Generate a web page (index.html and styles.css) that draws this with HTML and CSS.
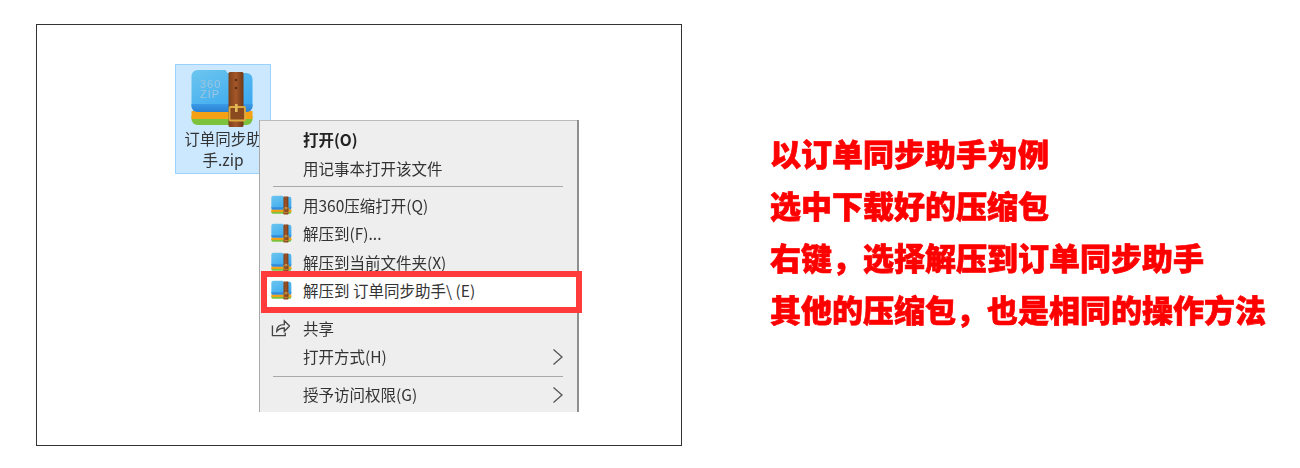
FILE: index.html
```html
<!DOCTYPE html>
<html lang="zh-CN">
<head>
<meta charset="utf-8">
<title>解压说明</title>
<link rel="stylesheet" href="styles.css">
</head>
<body>
<svg class="defs" width="0" height="0" aria-hidden="true">
  <defs>
    <linearGradient id="sky" x1="0" y1="0" x2="0.7" y2="1">
      <stop offset="0" stop-color="#6cc6ee"/>
      <stop offset="1" stop-color="#3ba8f0"/>
    </linearGradient>
    <linearGradient id="band" x1="0" y1="0" x2="0" y2="1">
      <stop offset="0" stop-color="#3a9ae6"/>
      <stop offset="1" stop-color="#2a80d2"/>
    </linearGradient>
    <linearGradient id="strap" x1="0" y1="0" x2="1" y2="0">
      <stop offset="0" stop-color="#7d4019"/>
      <stop offset="0.5" stop-color="#a4572a"/>
      <stop offset="1" stop-color="#6e3816"/>
    </linearGradient>
    <symbol id="archive" viewBox="0 0 64 60">
      <path d="M1 48h61v3a6 6 0 0 1-6 6H7a6 6 0 0 1-6-6z" fill="#7cc23c"/>
      <rect x="1" y="43" width="61" height="8" fill="#f5a116"/>
      <path d="M1 8a6 6 0 0 1 6-6h28l2 3h19a6 6 0 0 1 6 6v27a6 6 0 0 1-6 6H7a6 6 0 0 1-6-6z" fill="url(#sky)"/>
      <path d="M1 36h61v2a6 6 0 0 1-6 6H7a6 6 0 0 1-6-6z" fill="url(#band)"/>
      <rect x="38" y="4" width="15" height="55" rx="1.500" fill="url(#strap)"/>
      <circle cx="45.500" cy="12" r="1.300" fill="#5e2f12"/>
      <circle cx="45.500" cy="20" r="1.300" fill="#5e2f12"/>
      <rect x="39" y="39" width="15.500" height="13.500" rx="1" fill="#8a4a20" stroke="#dcab40" stroke-width="1.800"/>
      <rect x="44.500" y="36" width="2.600" height="8" fill="#e2bb5c"/>
    </symbol>
  </defs>
</svg>

<main class="page">
  <section class="frame">
    <div class="file-tile">
      <svg class="file-icon" viewBox="0 0 64 60"><use href="#archive"/></svg>
      <div class="watermark">360<br>ZIP</div>
      <div class="file-name">订单同步助<br>手.zip</div>
    </div>

    <div class="menu">
      <div class="group">
        <div class="row strong"><span class="label">打开(O)</span></div>
        <div class="row"><span class="label">用记事本打开该文件</span></div>
      </div>
      <div class="sep"></div>
      <div class="group">
        <div class="row"><svg class="ico"><use href="#archive"/></svg><span class="label">用360压缩打开(Q)</span></div>
        <div class="row"><svg class="ico"><use href="#archive"/></svg><span class="label">解压到(F)...</span></div>
        <div class="row"><svg class="ico"><use href="#archive"/></svg><span class="label">解压到当前文件夹(X)</span></div>
        <div class="row marked"><svg class="ico"><use href="#archive"/></svg><span class="label">解压到 订单同步助手\ (E)</span></div>
      </div>
      <div class="group spaced">
        <div class="row">
          <svg class="ico share" viewBox="0 0 20 20"><path d="M1.500 8v10.500h13.500v-3M6 14c0-4.500 3-7 8-7V3l5.500 5.500L14 14v-3.500c-3.500 0-6 1-8 3.500z" fill="none" stroke="#444" stroke-width="1.400"/></svg>
          <span class="label">共享</span>
        </div>
        <div class="row"><span class="label">打开方式(H)</span><svg class="chev" viewBox="0 0 12 18"><path d="M1.500 1.500 10 9l-8.500 7.500" fill="none" stroke="#555" stroke-width="1.300"/></svg></div>
      </div>
      <div class="sep tail"></div>
      <div class="group">
        <div class="row"><span class="label">授予访问权限(G)</span><svg class="chev" viewBox="0 0 12 18"><path d="M1.500 1.500 10 9l-8.500 7.500" fill="none" stroke="#555" stroke-width="1.300"/></svg></div>
      </div>
    </div>
  </section>

  <section class="notes">
    <p>以订单同步助手为例</p>
    <p>选中下载好的压缩包</p>
    <p>右键，选择解压到订单同步助手</p>
    <p>其他的压缩包，也是相同的操作方法</p>
  </section>
</main>
</body>
</html>
```
FILE: styles.css
```css
* { box-sizing: border-box; }
html, body { margin: 0; height: 100%; background: #fff; overflow: hidden; }
body { font-family: "Noto Sans CJK SC", "Liberation Sans", sans-serif; }
.defs { position: absolute; }

.page {
  display: flex;
  align-items: flex-start;
  padding: 24px 0 0 36px;
}

.frame {
  position: relative;
  flex: none;
  width: 646px;
  height: 422px;
  border: 1px solid #333;
  background: #fff;
}

.file-tile {
  position: absolute;
  left: 138px;
  top: 39px;
  width: 96px;
  height: 110px;
  background: #cce8ff;
  border: 1px solid #99d1ff;
  text-align: center;
  filter: blur(0.3px);
}
.file-icon {
  display: block;
  width: 65px;
  height: 60px;
  margin: 3px 0 0 14px;
}
.watermark {
  position: absolute;
  left: 24px;
  top: 14px;
  font: 11px/10px "Liberation Sans", sans-serif;
  letter-spacing: 1px;
  color: #9cc6e0;
  text-align: left;
}
.file-name {
  margin-top: 0;
  font-size: 15.5px;
  line-height: 21px;
  color: #333;
  white-space: nowrap;
}

.menu {
  position: absolute;
  left: 222px;
  top: 95px;
  width: 318px;
  height: 292px;
  padding-top: 4px;
  background: #eeeeee;
  border: 1px solid #a9a9a9;
  border-bottom: 0;
  border-right: 0;
  border-top-color: #bbb;
  box-shadow: 2px 0 0 #8f8f8f;
  font-size: 15.5px;
  color: #333;
  filter: blur(0.3px);
}
.row {
  position: relative;
  z-index: 0;
  display: flex;
  align-items: center;
  height: 28.4px;
  padding-left: 43px;
}
.strong .label { font-weight: 700; color: #222; }
.group .ico {
  position: absolute;
  left: 11px;
  top: 4px;
  width: 21px;
  height: 20px;
}
.group .share { left: 11px; top: 5px; width: 19px; height: 19px; }
.label { white-space: pre; line-height: 20px; }
.chev {
  position: absolute;
  right: 13px;
  top: 6px;
  width: 12px;
  height: 18px;
}
.sep {
  height: 1px;
  margin: 4px 14px 4px 13px;
  background: #a8a8a8;
}
.sep.tail { margin-top: 6px; margin-bottom: 3px; }
.spaced { margin-top: 9px; }

.marked::before {
  content: "";
  position: absolute;
  z-index: -1;
  left: 1px;
  right: -5px;
  top: -5px;
  bottom: -9px;
  background: #fff;
  border: 6px solid #ff3b3b;
}

.notes {
  margin: 103px 0 0 88px;
  flex: none;
  filter: blur(0.3px);
}
.notes p {
  margin: 0;
  font-size: 31px;
  line-height: 52px;
  font-weight: 900;
  color: #ff0000;
  white-space: nowrap;
  -webkit-text-stroke: 0.7px #ff0000;
}
```
